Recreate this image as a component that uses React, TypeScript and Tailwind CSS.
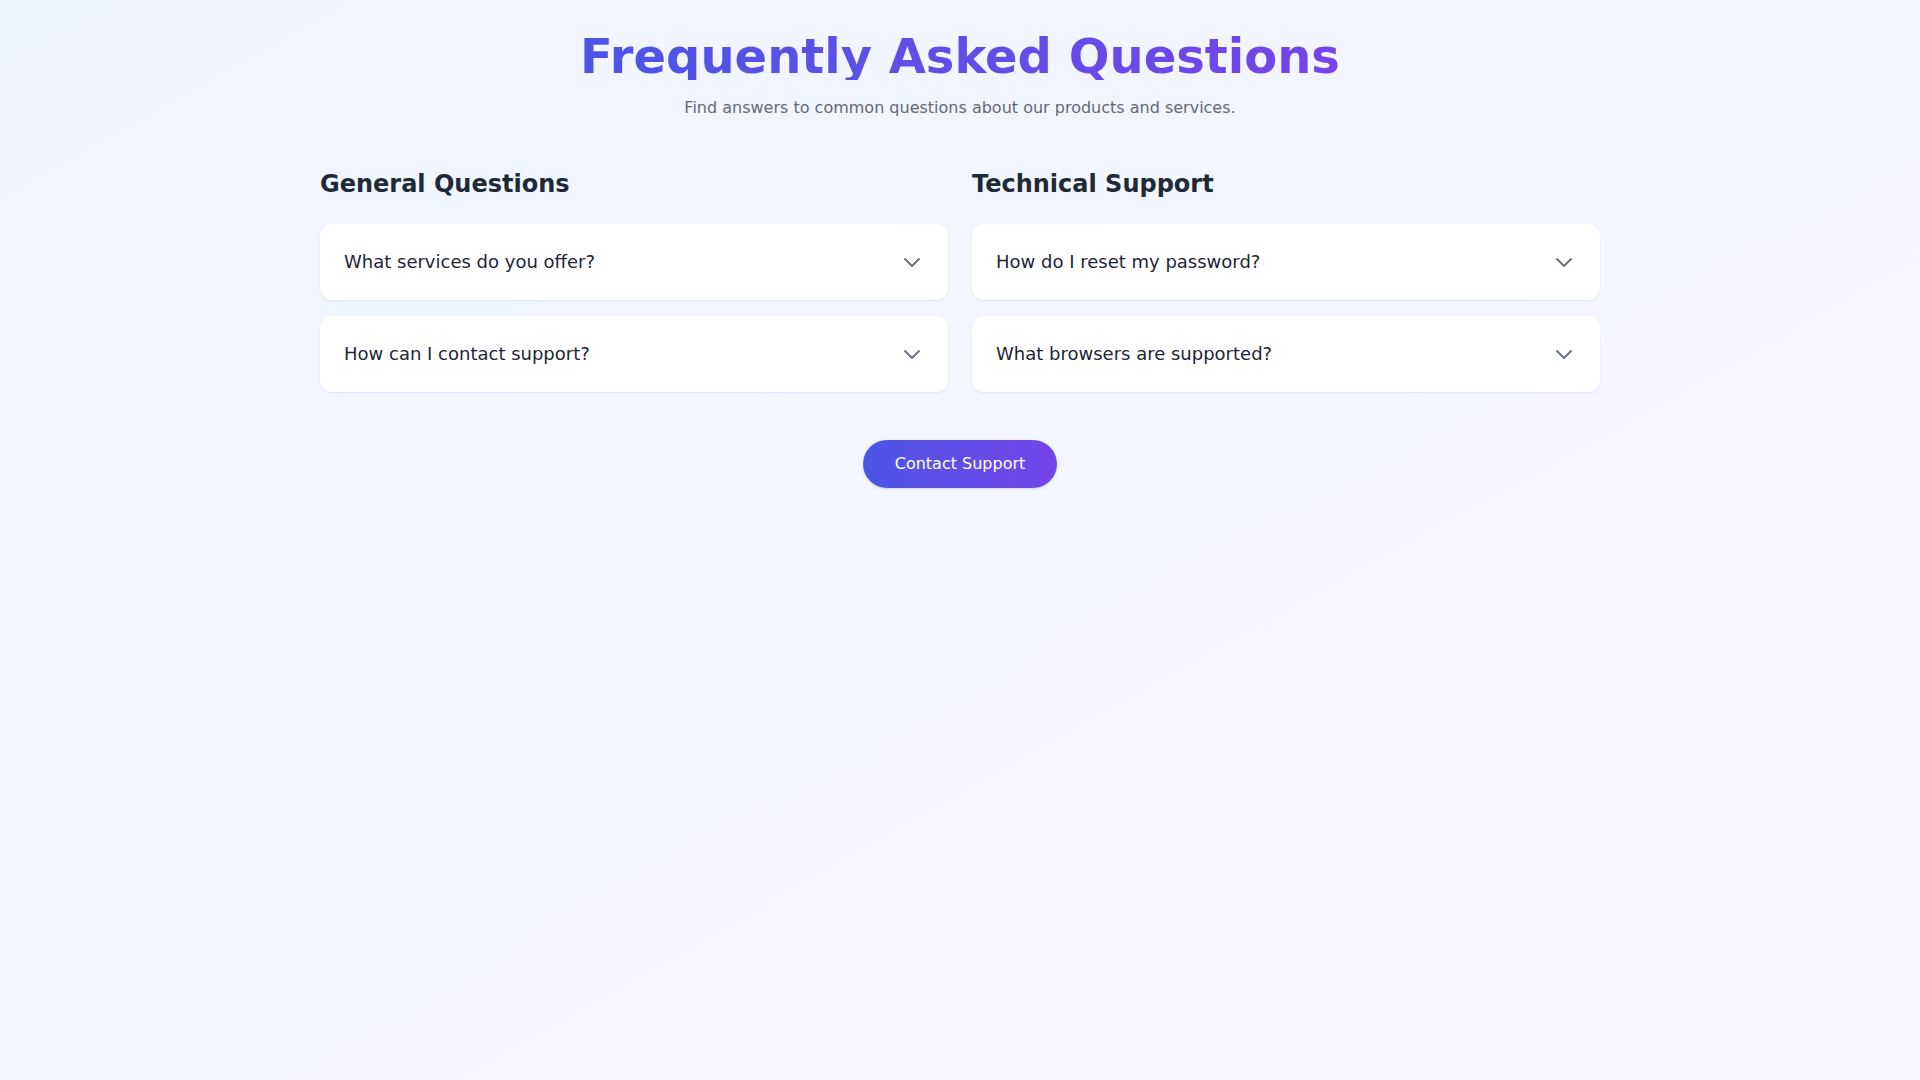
import { useState } from 'react';

const SECTIONS = [
  {
    title: 'General Questions',
    items: [
      { q: 'What services do you offer?', a: 'We offer a wide range of products and services tailored to your needs.' },
      { q: 'How can I contact support?', a: 'You can reach our support team via email or the contact form.' }
    ]
  },
  {
    title: 'Technical Support',
    items: [
      { q: 'How do I reset my password?', a: 'Click "Forgot password" on the login page and follow the instructions.' },
      { q: 'What browsers are supported?', a: 'All modern browsers, including Chrome, Firefox, Safari and Edge.' }
    ]
  }
];

function Chevron({ open }: { open: boolean }) {
  return (
    <svg
      className={open ? 'h-6 w-6 text-[#6b7280] rotate-180 transition-transform' : 'h-6 w-6 text-[#6b7280] transition-transform'}
      fill="none"
      viewBox="0 0 24 24"
      stroke="currentColor"
      strokeWidth={2}
    >
      <path strokeLinecap="round" strokeLinejoin="round" d="M19 9l-7 7-7-7" />
    </svg>
  );
}

function FaqItem({ q, a }: { q: string; a: string }) {
  const [open, setOpen] = useState(false);
  return (
    <div className="rounded-xl bg-white shadow-[0_1px_2px_rgba(99,102,241,0.12)]">
      <button
        onClick={() => setOpen(!open)}
        className="flex w-full items-center justify-between px-6 py-6 text-left"
      >
        <span className="text-lg leading-7 text-[#1e2535]">{q}</span>
        <Chevron open={open} />
      </button>
      {open && <p className="px-6 pb-6 text-base text-[#4b5563]">{a}</p>}
    </div>
  );
}

export default function App() {
  return (
    <main className="min-h-screen bg-gradient-to-br from-[#eff5ff] to-[#f8f6ff] font-['DejaVu_Sans',sans-serif]">
      <div className="mx-auto max-w-[1280px] pt-8">
        <header className="mb-12 text-center">
          <h1 className="mb-4 inline-block bg-gradient-to-r from-[#4b55e6] to-[#7444e8] bg-clip-text text-5xl leading-none font-bold text-transparent">
            Frequently Asked Questions
          </h1>
          <p className="text-base leading-6 text-[#64677a]">
            Find answers to common questions about our products and services.
          </p>
        </header>

        <div className="grid grid-cols-2 gap-6">
          {SECTIONS.map((s) => (
            <section key={s.title}>
              <h2 className="mb-6 text-2xl leading-8 font-bold text-[#1f2937]">{s.title}</h2>
              <div className="flex flex-col gap-4">
                {s.items.map((it) => (
                  <FaqItem key={it.q} q={it.q} a={it.a} />
                ))}
              </div>
            </section>
          ))}
        </div>

        <div className="mt-12 flex justify-center">
          <button className="rounded-full bg-gradient-to-r from-[#4b55e6] to-[#7444e8] px-8 py-3 text-base leading-6 text-white shadow-sm">
            Contact Support
          </button>
        </div>
      </div>
    </main>
  );
}
